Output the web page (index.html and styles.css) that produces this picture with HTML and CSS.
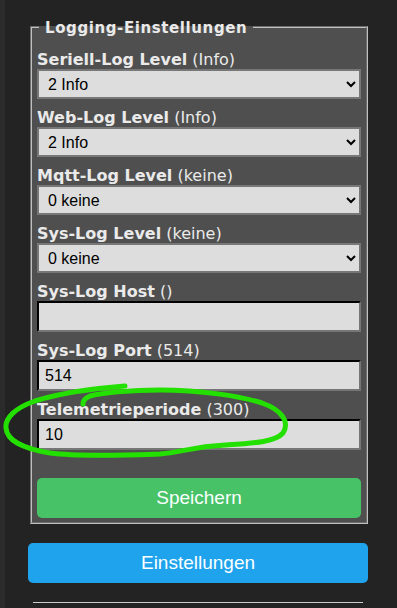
FILE: index.html
```html
<!DOCTYPE html>
<html>
<head lang="de">
    <meta charset="UTF-8">
    <title>Logging-Einstellungen</title>
    <link rel="stylesheet" href="styles.css">
</head>
<body>
    <div class="page">
        <fieldset class="box">
            <legend>Logging-Einstellungen</legend>
            <p><b>Seriell-Log Level</b> (Info)
                <select><option>2 Info</option></select></p>
            <p><b>Web-Log Level</b> (Info)
                <select><option>2 Info</option></select></p>
            <p><b>Mqtt-Log Level</b> (keine)
                <select><option>0 keine</option></select></p>
            <p><b>Sys-Log Level</b> (keine)
                <select><option>0 keine</option></select></p>
            <p><b>Sys-Log Host</b> ()
                <input type="text" value=""></p>
            <p><b>Sys-Log Port</b> (514)
                <input type="text" value="514"></p>
            <p><b>Telemetrieperiode</b> (300)
                <input type="text" value="10"></p>
            <button class="btn green">Speichern</button>
        </fieldset>
        <button class="btn blue">Einstellungen</button>
        <div class="line"></div>
    </div>
    <svg class="mark" width="397" height="608" viewBox="0 0 397 608">
        <path d="M125 386 C100 388 60 393 35 401 C15 408 5 418 6 428 C7 440 20 448 50 453 C80 457 130 455 160 454 C185 452 190 447 225 445 C255 443 275 442 283 433 C290 422 282 410 262 403 C240 396 200 390 160 390 C130 390 100 393 90 396 C85 398 83 401 83 404"
              fill="none" stroke="#24e000" stroke-width="5" stroke-linecap="round" stroke-linejoin="round"/>
    </svg>
</body>
</html>
```

FILE: styles.css
```css
*{
    box-sizing:border-box;
}
body{
    margin:0;
    background:#232323;
    border-left:5px solid #2b2b2b;
    min-height:608px;
    font-family:"DejaVu Sans",Verdana,sans-serif;
    font-size:16px;
    color:#eaeaea;
}
.page{
    width:340px;
    margin-left:23px;
    padding-top:18px;
}
.box{
    margin:0 0 19px 2px;
    padding:15px 5px 4px 5px;
    background:#4f4f4f;
    border:2px groove #c0c0c0;
}
.box legend{
    font-size:15px;
    font-weight:bold;
    letter-spacing:0.6px;
    padding:2px 6px 0 6px;
    margin-left:2px;
    line-height:16px;
}
.box p{
    margin:0 0 10px 0;
    line-height:18px;
}
.box select,.box input{
    display:block;
    width:100%;
    background:#dddddd;
    color:#000;
    font-family:"Liberation Sans",Arial,sans-serif;
    font-size:16px;
}
.box select{
    height:30px;
    border:2px solid #777;
    padding:0 5px;
}
.box input{
    height:31px;
    border:2px inset #767676;
    border-top-color:#2a2a2a;
    border-left-color:#2a2a2a;
    padding:0 6px;
}
.btn{
    display:block;
    width:100%;
    height:40px;
    border:0;
    border-radius:5px;
    color:#faffff;
    font-family:"Liberation Sans",Arial,sans-serif;
    font-size:19px;
    cursor:pointer;
}
.green{
    background:#47c266;
    margin-top:28px;
}
.blue{
    background:#1fa3ec;
}
.line{
    margin:19px 0 0 5px;
    width:330px;
    border-top:1px solid #ccc;
}
.mark{
    position:absolute;
    left:0;
    top:0;
    pointer-events:none;
}
```
